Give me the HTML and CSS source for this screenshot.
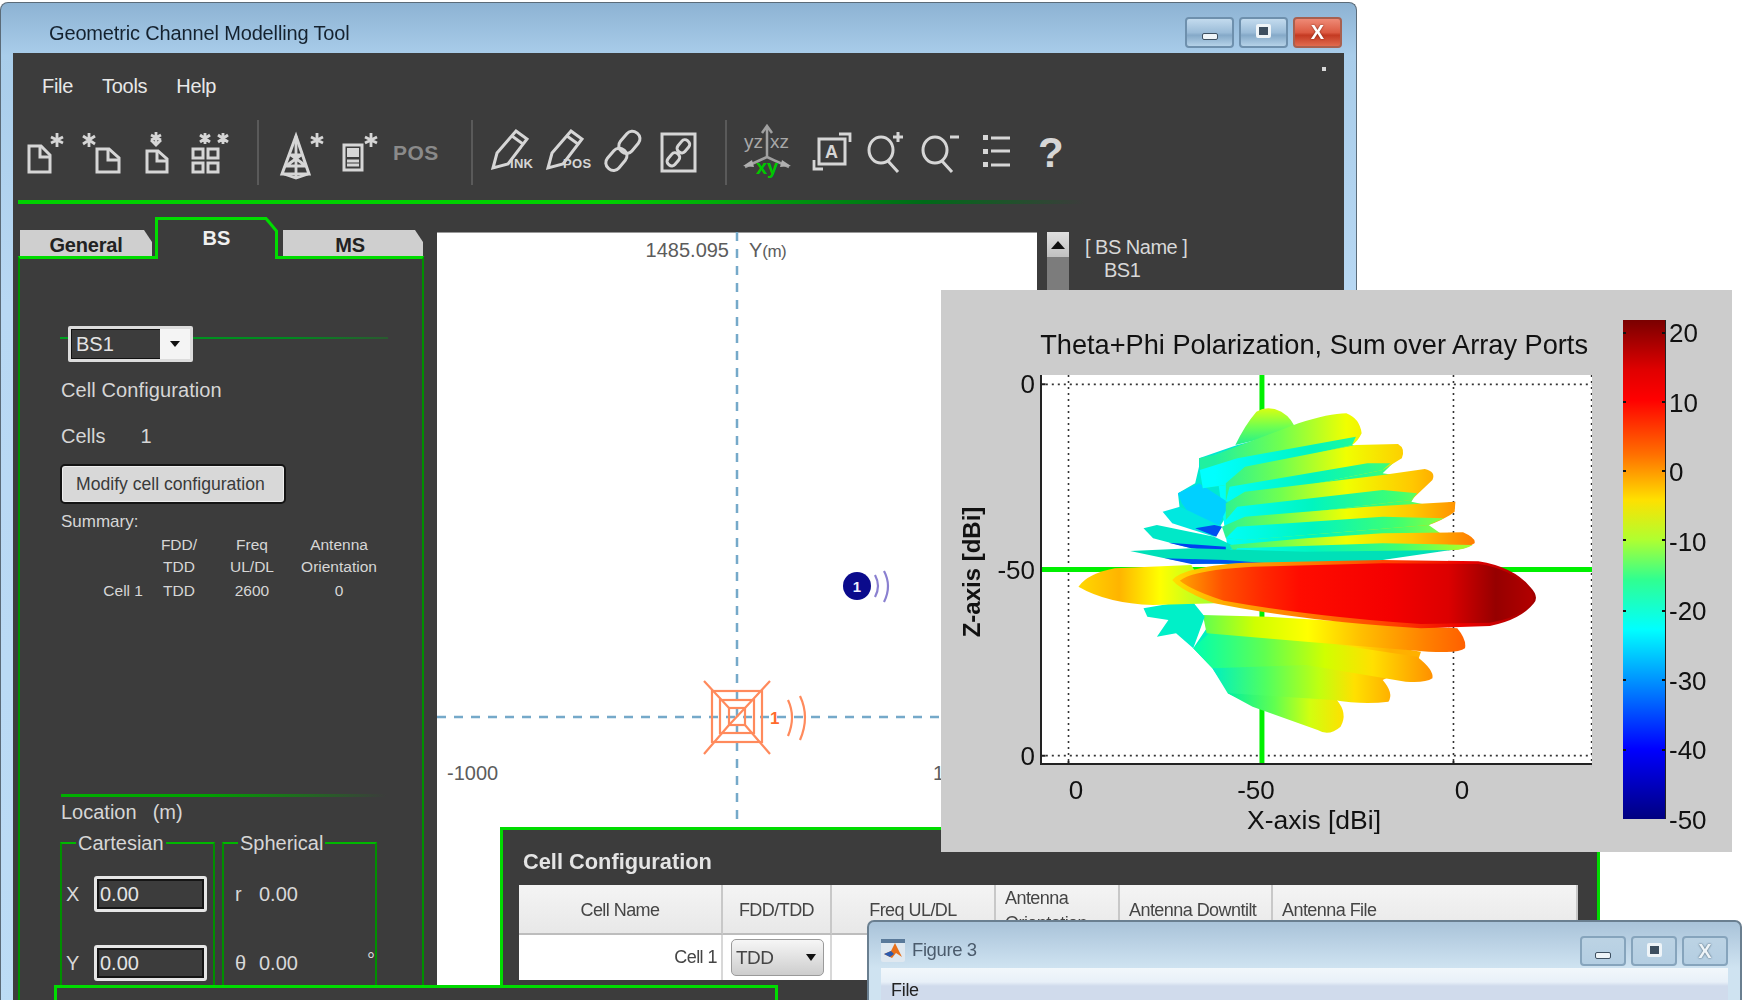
FILE: index.html
```html
<!DOCTYPE html>
<html lang="en">
<head>
<meta charset="utf-8">
<title>Geometric Channel Modelling Tool</title>
<link rel="stylesheet" href="styles.css">
</head>
<body>
<div class="desktop">

  <section class="win main-win">
    <header class="titlebar">
      <span class="title-text">Geometric Channel Modelling Tool</span>
      <div class="win-btns">
        <span class="wbtn"><i class="g-min"></i></span>
        <span class="wbtn"><i class="g-max"></i></span>
        <span class="wbtn wbtn-close"><b>X</b></span>
      </div>
    </header>
    <div class="content">
      <span class="corner-dot"></span>
      <nav class="menu"><span>File</span><span>Tools</span><span>Help</span></nav>
      <div class="toolbar">
        <svg class="ic" width="40" height="67" viewBox="26 119 40 67"><path d="M28 146h12l9 9v17H28z"/><path d="M39 147v10h10"/><path class="thin" d="M56 133v14M50 137l12 6M62 137l-12 6"/></svg>
        <svg class="ic" width="52" height="67" viewBox="70 119 52 67"><path d="M96 149h12l10 9v14H96z"/><path d="M107 150v10h11"/><path class="thin" d="M88 133v14M82 136l12 8M94 136l-12 8"/></svg>
        <svg class="ic" width="46" height="67" viewBox="126 119 46 67"><path d="M146 151h11l9 8v13h-20z"/><path d="M156 152v9h10"/><path class="thin" d="M155 132v12M150 140l5 5 5-5M150 135l10 5M160 135l-10 5"/></svg>
        <svg class="ic" width="56" height="67" viewBox="176 119 56 67"><rect x="192" y="149" width="10" height="9"/><rect x="207" y="149" width="10" height="9"/><rect x="192" y="163" width="10" height="9"/><rect x="207" y="163" width="10" height="9"/><path class="thin" d="M204 133v11M199 135l10 7M209 135l-10 7M222 133v11M217 135l10 7M227 135l-10 7"/></svg>
        <svg class="sepv" width="40" height="67"><line x1="21" y1="1" x2="21" y2="66"/></svg>
        <svg class="ic" width="46" height="67" viewBox="280 119 46 67"><path d="M295 136l-14 38h27z"/><path class="thin" d="M295 136v42M289 155h12M284 166h22M290 155l15 11M300 155l-15 11M283 174l12 4 12-4"/><path class="thin" d="M316 133v14M310 137l12 6M322 137l-12 6"/></svg>
        <svg class="ic" width="50" height="67" viewBox="330 119 50 67"><rect x="343" y="145" width="18" height="25"/><rect class="solid" x="346" y="148" width="12" height="9"/><path class="thin" d="M346 161h12M346 165h12"/><path class="thin" d="M370 133v14M364 137l12 6M376 137l-12 6"/></svg>
        <span class="pos-label">POS</span>
        <svg class="sepv" width="32" height="67"><line x1="16" y1="1" x2="16" y2="66"/></svg>
        <svg class="ic" width="49" height="67" viewBox="491 119 49 67"><path d="M515 131l11 8-19 25-15 4 4-15z"/><path class="thin" d="M511 136l11 8"/><text class="ic-text" x="509" y="168">INK</text></svg>
        <svg class="ic" width="50" height="67" viewBox="544 119 50 67"><path d="M570 131l11 8-19 25-15 4 4-15z"/><path class="thin" d="M566 136l11 8"/><text class="ic-text" x="562" y="168">POS</text></svg>
        <svg class="ic" width="52" height="67" viewBox="598 119 52 67"><rect x="621" y="130" width="15" height="24" rx="7" transform="rotate(40 628 142)"/><rect x="608" y="147" width="15" height="24" rx="7" transform="rotate(40 615 159)"/></svg>
        <svg class="ic" width="54" height="67" viewBox="654 119 54 67"><rect x="661" y="134" width="33" height="37"/><rect x="678" y="139" width="9" height="14" rx="4" transform="rotate(40 682 146)"/><rect x="668" y="152" width="9" height="14" rx="4" transform="rotate(40 672 159)"/></svg>
        <svg class="sepv" width="26" height="67"><line x1="13" y1="1" x2="13" y2="66"/></svg>
        <svg class="ic axes" width="58" height="67" viewBox="742 119 58 67"><path class="gray" d="M766 157v-30M761 133l5-7 5 7M766 157l-22 10M766 157l22 10"/><path class="arrow" d="M742 166l9-6 2 7zM790 166l-9-6-2 7z"/><text class="ax-text" x="743" y="148">yz</text><text class="ax-text" x="769" y="148">xz</text><text class="ax-green" x="755" y="174">xy</text></svg>
        <svg class="ic" width="52" height="67" viewBox="804 119 52 67"><rect x="818" y="139" width="26" height="25"/><text class="box-a" x="824" y="158">A</text><path class="thin" d="M838 134h11v8M813 160v9h9"/></svg>
        <svg class="ic" width="50" height="67" viewBox="860 119 50 67"><ellipse cx="880" cy="150" rx="12" ry="13"/><path d="M887 161l10 11M892 137h10M897 132v10"/></svg>
        <svg class="ic" width="50" height="67" viewBox="914 119 50 67"><ellipse cx="934" cy="150" rx="12" ry="13"/><path d="M941 161l10 11M949 137h9"/></svg>
        <svg class="ic" width="52" height="67" viewBox="968 119 52 67"><path class="sq" d="M982 135h5v5h-5zM982 149h5v5h-5zM982 162h5v5h-5z"/><path d="M990 138h19M990 151h19M990 165h19"/></svg>
        <span class="help-q">?</span>
      </div>
      <div class="rule"></div>

      <div class="workspace">
        <div class="left-col">
          <div class="tabs">
            <span class="tab tab-general">General</span>
            <span class="tab-active">
              <svg class="tab-shape" width="123" height="42" viewBox="0 0 123 42"><polyline points="1.5,42 1.5,1.5 111,1.5 121.5,14 121.5,42"/></svg>
              <span class="tab-active-text">BS</span>
            </span>
            <span class="tab tab-ms">MS</span>
          </div>
          <div class="panel">
            <div class="combo-row">
              <div class="combo"><span class="combo-val">BS1</span><span class="combo-arrow"><i></i></span></div>
            </div>
            <div class="lbl cfg">Cell Configuration</div>
            <div class="lbl cells"><span>Cells</span><span>1</span></div>
            <button class="mod-btn" type="button">Modify cell configuration</button>
            <div class="summary">Summary:</div>
            <div class="sum-grid">
              <span></span><span>FDD/</span><span>Freq</span><span>Antenna</span>
              <span></span><span>TDD</span><span>UL/DL</span><span>Orientation</span>
              <span class="r">Cell 1</span><span>TDD</span><span>2600</span><span>0</span>
            </div>
            <div class="fade-rule"></div>
            <div class="lbl location"><span>Location</span><span>(m)</span></div>
            <div class="groups">
              <fieldset class="grp">
                <legend>Cartesian</legend>
                <div class="row"><span class="axis">X</span><span class="inp">0.00</span></div>
                <div class="row"><span class="axis">Y</span><span class="inp">0.00</span></div>
              </fieldset>
              <fieldset class="grp grp-sph">
                <legend>Spherical</legend>
                <div class="row"><span class="axis">r</span><span>0.00</span></div>
                <div class="row"><span class="axis">θ</span><span>0.00</span><span class="deg">°</span></div>
              </fieldset>
            </div>
          </div>
        </div>

        <div class="map">
          <svg class="map-svg" width="600" height="600" viewBox="437 233 600 600">
            <line class="dash" x1="737" y1="233" x2="737" y2="833"/>
            <line class="dash" x1="437" y1="718" x2="1037" y2="718"/>
            <g class="bs-ico">
              <rect x="712" y="692" width="50" height="51"/>
              <rect x="720" y="701" width="34" height="33"/>
              <rect x="729" y="709" width="16" height="17"/>
              <path d="M704 682l25 27M770 682l-25 27M704 755l25-29M770 755l-25-29M745 709l-16 17"/>
              <path d="M788 701q8 17 0 36M800 697q10 21 0 44"/>
            </g>
            <text class="bs-num" x="770" y="725">1</text>
            <circle class="ms-c" cx="857" cy="587" r="14"/>
            <text class="ms-num" x="857" y="593">1</text>
            <path class="ms-arc" d="M875 576q6 11 0 22M884 572q8 15 0 31"/>
            <text class="map-t" x="729" y="258" text-anchor="end">1485.095</text>
            <text class="map-t" x="749" y="258">Y<tspan class="map-small">(m)</tspan></text>
            <text class="map-t" x="447" y="781">-1000</text>
            <text class="map-t" x="933" y="781">1</text>
          </svg>
        </div>

        <div class="scroll"><span class="scroll-up"><i></i></span><span class="scroll-thumb"></span></div>
        <div class="bs-list"><div>[ BS Name ]</div><div class="bs-item">BS1</div></div>
      </div>
    </div>
  </section>

  <section class="cell-win">
    <h2 class="cell-title">Cell Configuration</h2>
    <div class="cell-table">
      <div class="th c">Cell Name</div>
      <div class="th c">FDD/TDD</div>
      <div class="th c">Freq UL/DL</div>
      <div class="th">Antenna Orientation</div>
      <div class="th">Antenna Downtilt</div>
      <div class="th">Antenna File</div>
      <div class="td r">Cell 1</div>
      <div class="td"><span class="sel">TDD<i></i></span></div>
      <div class="td"></div><div class="td"></div><div class="td"></div><div class="td"></div>
    </div>
  </section>

  <section class="bottom-win"></section>

  <section class="fig-win">
    <header class="fig-title">
      <svg class="fig-ico" width="24" height="23" viewBox="0 0 24 23"><rect width="24" height="23" rx="2" fill="#dfe8f0"/><rect width="24" height="4" fill="#5a7a9a"/><path d="M3 15l7-3 4-8 7 14-6-4-4 5z" fill="#e8701a"/><path d="M3 15l7-3 3 3-4 3z" fill="#2a5ab0"/></svg>
      <span class="fig-name">Figure 3</span>
      <div class="fig-btns">
        <span class="wbtn fbtn"><i class="g-min"></i></span>
        <span class="wbtn fbtn"><i class="g-max"></i></span>
        <span class="wbtn fbtn"><b>X</b></span>
      </div>
    </header>
    <div class="fig-body"><div class="fig-menu">File</div></div>
  </section>

  <section class="chart">
    <div class="chart-title">Theta+Phi Polarization, Sum over Array Ports</div>
    <div class="ylabel"><span>Z-axis [dBi]</span></div>
    <div class="yticks"><span>0</span><span>-50</span><span>0</span></div>
    <div class="plot">
      <svg width="552" height="390" viewBox="104.5 15 1442.5 1170" preserveAspectRatio="none">
        <defs>
          <linearGradient id="gTop" gradientUnits="userSpaceOnUse" x1="560" y1="0" x2="1250" y2="0"><stop offset="0" stop-color="#20f0a0"/><stop offset=".25" stop-color="#70ff50"/><stop offset=".5" stop-color="#f0ff00"/><stop offset=".75" stop-color="#ffc800"/><stop offset="1" stop-color="#ff7800"/></linearGradient>
          <linearGradient id="gLow" gradientUnits="userSpaceOnUse" x1="560" y1="0" x2="1200" y2="0"><stop offset="0" stop-color="#00ffff"/><stop offset=".4" stop-color="#00f5c0"/><stop offset=".75" stop-color="#40ff70"/><stop offset="1" stop-color="#a0ff30"/></linearGradient>
          <linearGradient id="gTopLobe" x1="0" y1="0" x2="0" y2="1"><stop offset="0" stop-color="#d8ff10"/><stop offset=".5" stop-color="#70ff50"/><stop offset="1" stop-color="#20f090"/></linearGradient>
          <linearGradient id="gYel" gradientUnits="userSpaceOnUse" x1="205" y1="0" x2="560" y2="0"><stop offset="0" stop-color="#ffd800"/><stop offset=".3" stop-color="#ffb400"/><stop offset=".6" stop-color="#ffff00"/><stop offset="1" stop-color="#a0ff30"/></linearGradient>
          <linearGradient id="gEdge" gradientUnits="userSpaceOnUse" x1="450" y1="0" x2="1400" y2="0"><stop offset="0" stop-color="#ffe000"/><stop offset=".12" stop-color="#ffb000"/><stop offset=".35" stop-color="#ff8000"/><stop offset=".62" stop-color="#ff3c00"/><stop offset=".8" stop-color="#ee0000"/><stop offset="1" stop-color="#a00000"/></linearGradient>
          <linearGradient id="gMain" gradientUnits="userSpaceOnUse" x1="450" y1="0" x2="1400" y2="0"><stop offset="0" stop-color="#ffb000"/><stop offset=".06" stop-color="#ff8800"/><stop offset=".14" stop-color="#ff5000"/><stop offset=".25" stop-color="#ff2800"/><stop offset=".35" stop-color="#ff0c00"/><stop offset=".6" stop-color="#f40000"/><stop offset=".76" stop-color="#dc0000"/><stop offset=".89" stop-color="#960000"/><stop offset="1" stop-color="#b40000"/></linearGradient>
          <linearGradient id="gD1" gradientUnits="userSpaceOnUse" x1="530" y1="0" x2="1215" y2="0"><stop offset="0" stop-color="#60ff50"/><stop offset=".2" stop-color="#d0ff00"/><stop offset=".4" stop-color="#ffff00"/><stop offset=".6" stop-color="#ffc000"/><stop offset=".85" stop-color="#ff8000"/><stop offset="1" stop-color="#ff6000"/></linearGradient>
          <linearGradient id="gD2" gradientUnits="userSpaceOnUse" x1="505" y1="0" x2="1130" y2="0"><stop offset="0" stop-color="#00ffb0"/><stop offset=".3" stop-color="#60ff50"/><stop offset=".55" stop-color="#d0ff00"/><stop offset=".75" stop-color="#ffe000"/><stop offset="1" stop-color="#ff9000"/></linearGradient>
          <linearGradient id="gD3" gradientUnits="userSpaceOnUse" x1="555" y1="0" x2="1020" y2="0"><stop offset="0" stop-color="#00f0c0"/><stop offset=".3" stop-color="#50ff60"/><stop offset=".6" stop-color="#c0ff10"/><stop offset=".8" stop-color="#ffe000"/><stop offset="1" stop-color="#ffb000"/></linearGradient>
          <linearGradient id="gD4" gradientUnits="userSpaceOnUse" x1="595" y1="0" x2="900" y2="0"><stop offset="0" stop-color="#00f0a0"/><stop offset=".4" stop-color="#60ff50"/><stop offset=".7" stop-color="#d0ff10"/><stop offset="1" stop-color="#ffe000"/></linearGradient>
        </defs>
        <line class="dot" x1="179" y1="15" x2="179" y2="1185"/>
        <line class="dot" x1="1185" y1="15" x2="1185" y2="1185"/>
        <line class="dot" x1="1546" y1="15" x2="1546" y2="1185"/>
        <line class="dot" x1="104" y1="43" x2="1547" y2="43"/>
        <line class="dot" x1="104" y1="1157" x2="1547" y2="1157"/>
        <path class="tick" d="M105 43h14M105 1157h14M179 1185v-12M1185 1185v-12"/>
        <rect class="cross" x="678" y="15" width="13" height="1170"/>
        <rect class="cross" x="104" y="591" width="1443" height="15"/>
        <path fill="url(#gD3)" d="M505 835L560 740L1100 845L1090 880L1000 930L960 960L880 990L890 1030L830 1075L660 1005L595 970L555 895Z"/>
        <path fill="url(#gD4)" d="M595 970L680 925L880 990Q910 1030 890 1070Q860 1100 830 1080L660 1010Z"/>
        <path fill="url(#gD3)" d="M555 895L780 860L1000 930Q1030 970 1015 995Q950 1005 870 990L600 970Z"/>
        <path fill="url(#gD2)" d="M505 835L560 775L800 810L1090 860Q1135 900 1130 925Q1110 940 1060 935L800 885L555 895Z"/>
        <path fill="url(#gD1)" d="M530 735L700 740L1195 775Q1220 810 1215 835Q1200 850 1120 845L800 815L540 790Z"/>
        <path fill="#00f0c8" d="M375 715L500 690L535 740L505 835L460 790L410 800L440 750L385 740Z"/>
        <path fill="url(#gTopLobe)" d="M615 225Q640 165 670 125Q700 105 735 125Q765 145 775 185L690 205Z"/>
        <path fill="#00e8d0" d="M520 265L620 225L775 180L700 280L620 380L570 480L470 420L465 370L510 340L520 290Z"/>
        <path fill="url(#gLow)" d="M560 255L780 170L920 225L1040 265L1000 310L1110 330L1075 395L1180 420L1120 465L1200 530L950 578L600 578Z"/>
        <path fill="#00d0ff" d="M465 370L520 340L600 400L570 470L500 440L475 400Z"/>
        <path fill="url(#gTop)" d="M560 255L780 160Q860 130 905 130Q940 145 945 190Q935 215 920 225L640 300L590 345L530 355L520 265Z"/>
        <path fill="url(#gLow)" d="M530 355L522 300L620 265L930 200L920 225L640 300L590 345Z"/>
        <path fill="url(#gTop)" d="M590 340L640 290L930 225L1040 222Q1060 235 1050 265L1000 300L640 385L590 395Z"/>
        <path fill="url(#gLow)" d="M590 395L600 350L960 280L1020 280L1000 300L640 385Z"/>
        <path fill="url(#gTop)" d="M590 400L640 365L1000 315L1110 297Q1140 305 1130 330L1075 390L640 450L590 450Z"/>
        <path fill="url(#gLow)" d="M590 450L620 410L1000 360L1090 370L1075 390L640 450Z"/>
        <path fill="#00e8e0" d="M425 425L470 410L580 470L560 500L450 460Z"/>
        <path fill="#0050f0" d="M510 475L565 500L580 470L560 465Z"/>
        <path fill="url(#gTop)" d="M580 470L640 440L960 410L1190 395L1188 425Q1160 450 1120 465L640 510L590 505Z"/>
        <path fill="url(#gLow)" d="M590 505L620 470L1000 440L1160 445L1120 465L640 510Z"/>
        <path fill="#00e8c8" d="M375 475L410 465L560 500L615 530L590 545L500 535L400 505Z"/>
        <path fill="#0040f0" d="M440 518L590 530L590 548L500 535Z"/>
        <path fill="url(#gTop)" d="M600 525L800 505L1000 490L1210 487Q1245 505 1240 520Q1215 540 1180 540L620 560Z"/>
        <path fill="url(#gLow)" d="M600 560L620 535L1000 520L1235 525Q1215 540 1180 540L700 560Z"/>
        <path fill="#00e0b8" d="M340 543L500 535L800 545L1180 540L950 578L610 583L500 580L430 565Z"/>
        <path fill="#0050f0" d="M430 565L590 570L700 580L500 582Z"/>
        <path fill="url(#gYel)" d="M205 650Q230 610 300 595L500 585L560 700L400 705Q280 700 205 650Z"/>
        <path fill="url(#gEdge)" d="M450 630Q480 590 640 578L1000 570L1250 574Q1340 590 1385 650Q1410 680 1395 700Q1360 750 1280 768L1100 775Q800 755 560 700Q470 660 450 630Z"/>
        <path fill="url(#gMain)" d="M470 632Q505 600 660 590L1000 580L1250 582Q1335 595 1380 655Q1400 680 1390 700Q1355 745 1280 758L1100 762Q820 740 585 692Q500 660 470 632Z"/>
      </svg>
    </div>
    <svg class="cbar" width="46" height="500" viewBox="0 0 46 500">
      <defs><linearGradient id="jet" x1="0" y1="0" x2="0" y2="1"><stop offset="0" stop-color="#7a0000"/><stop offset=".1" stop-color="#e00000"/><stop offset=".16" stop-color="#ff0000"/><stop offset=".27" stop-color="#ff7000"/><stop offset=".36" stop-color="#ffe000"/><stop offset=".44" stop-color="#b0ff30"/><stop offset=".52" stop-color="#30ff90"/><stop offset=".62" stop-color="#00ffff"/><stop offset=".74" stop-color="#0080ff"/><stop offset=".86" stop-color="#0000ff"/><stop offset="1" stop-color="#000080"/></linearGradient></defs>
      <rect x="0" y="0" width="42" height="499" fill="url(#jet)"/>
      <path class="cb-line" d="M42.500 0v499"/>
      <path class="cb-tick" d="M0 13h3M39 13h3M0 82h3M39 82h3M0 151h3M39 151h3M0 220h3M39 220h3M0 291h3M39 291h3M0 360h3M39 360h3M0 430h3M39 430h3"/>
    </svg>
    <div class="cticks"><span>20</span><span>10</span><span>0</span><span>-10</span><span>-20</span><span>-30</span><span>-40</span><span>-50</span></div>
    <div class="xticks"><span>0</span><span>-50</span><span>0</span></div>
    <div class="xlabel">X-axis [dBi]</div>
  </section>

</div>
</body>
</html>
```
FILE: styles.css
```css
* { box-sizing: border-box; }
html, body { margin: 0; padding: 0; background: #fff; }
body { font-family: "Liberation Sans", Arial, sans-serif; }
.desktop { position: relative; width: 1750px; height: 1000px; overflow: hidden; background: #fff; }

/* main window */
.main-win {
  position: absolute; left: 0; top: 2px; width: 1357px; height: 1040px;
  display: flex; flex-direction: column;
  border: 1px solid #5b6b78; border-bottom: 0; border-radius: 8px 8px 0 0;
  background: linear-gradient(180deg, #8db3d3 0, #a9cdea 52px, #b8d8f3 300px, #bcdcf5 100%);
  padding: 0 12px 0 12px;
  filter: blur(.55px);
}
.titlebar { height: 50px; display: flex; align-items: center; justify-content: space-between; flex: none; }
.title-text { padding-left: 36px; font-size: 20px; letter-spacing: -.15px; color: #15222f; margin-top: 11px; }
.win-btns { display: flex; gap: 5px; margin-right: 2px; margin-top: 8px; }
.wbtn {
  width: 49px; height: 31px; display: flex; align-items: center; justify-content: center;
  border: 2px solid #6e90ad; border-radius: 4px;
  background: linear-gradient(180deg, #c3dbee 0, #9bbcd8 50%, #85a9c8 60%, #b5d2e8 100%);
}
.wbtn-close { background: linear-gradient(180deg, #ee8a76 0, #dc5a42 50%, #c43a22 60%, #e06a4e 100%); border-color: #a8604f; }
.wbtn-close b, .fbtn b { font-size: 20px; color: #fff; text-shadow: 0 0 2px #702010; }
.g-min { display: block; width: 16px; height: 7px; margin-top: 8px; background: #eef4f8; border: 1px solid #3d4f60; border-radius: 2px; }
.g-max { display: block; width: 15px; height: 14px; margin-top: -3px; border: 3px solid #eef4f8; outline: 1px solid #3d4f60; outline-offset: -5px; background: #3d4f60; border-radius: 2px; }
.content { position: relative; flex: 1; background: #3c3c3c; display: flex; flex-direction: column; min-height: 0; }
.corner-dot { position: absolute; right: 18px; top: 14px; width: 4px; height: 4px; background: #d8d8d8; }
.menu { height: 66px; display: flex; align-items: center; gap: 29px; padding-left: 29px; color: #e8e8e8; font-size: 20px; letter-spacing: -.3px; flex: none; }
.toolbar { height: 67px; display: flex; align-items: center; gap: 4px; padding-left: 14px; flex: none; }
.toolbar svg { flex: none; overflow: visible; }
.ic path, .ic rect, .ic ellipse { fill: none; stroke: #d6d6d6; stroke-width: 3; }
.ic .thin { stroke-width: 2.8; }
.ic .solid { fill: #d6d6d6; stroke: none; }
.ic .sq { fill: #d6d6d6; stroke: none; }
.ic .gray { stroke: #a0a0a0; stroke-width: 2.5; }
.ic .arrow { fill: #b0b0b0; stroke: none; }
.ic-text { font: bold 13px "Liberation Sans", sans-serif; fill: #d6d6d6; letter-spacing: .3px; }
.ax-text { font: 19px "Liberation Sans", sans-serif; fill: #a8a8a8; }
.ax-green { font: bold 20px "Liberation Sans", sans-serif; fill: #00c800; }
.box-a { font: bold 18px "Liberation Sans", sans-serif; fill: #d6d6d6; }
.sepv line { stroke: #5a5a5a; stroke-width: 2; }
.pos-label { width: 67px; padding-left: 8px; font-weight: bold; font-size: 21px; color: #8a8a8a; letter-spacing: .5px; }
.help-q { width: 46px; padding-left: 13px; font-weight: bold; font-size: 42px; line-height: 42px; color: #d6d6d6; }
.rule { height: 4px; margin: 14px 260px 0 5px; background: linear-gradient(90deg, #00d000 0, #00d000 55%, #006a18 85%, #3c3c3c 100%); flex: none; }

.workspace { flex: 1; display: flex; align-items: stretch; padding: 13px 0 0 5px; min-height: 0; color: #d8d8d8; }
.left-col { width: 406px; flex: none; display: flex; flex-direction: column; }
.tabs { height: 39px; display: flex; align-items: flex-end; padding-left: 2px; flex: none; position: relative; z-index: 1; }
.tab {
  height: 26px; padding-top: 4px; display: flex; align-items: center; justify-content: center;
  background: #cfcfcf; color: #222; font-weight: bold; font-size: 20px; letter-spacing: -.2px;
  clip-path: polygon(0 0, calc(100% - 8px) 0, 100% 12px, 100% 100%, 0 100%);
}
.tab-general { width: 132px; margin-right: 3px; }
.tab-ms { width: 140px; margin-left: 5px; padding-right: 6px; }
.tab-active { position: relative; width: 123px; height: 42px; margin-bottom: -3px; display: block; }
.tab-shape { position: absolute; left: 0; top: 0; }
.tab-shape polyline { fill: #3c3c3c; stroke: #00dc00; stroke-width: 3; }
.tab-active-text { position: relative; display: block; text-align: center; padding-top: 10px; color: #f0f0f0; font-weight: bold; font-size: 20px; }
.panel {
  flex: 1; min-height: 0; padding-left: 41px;
  border: 2px solid #009000; border-top: 3px solid #00dc00; border-bottom: 0;
}
.combo-row { position: relative; margin-top: 67px; height: 36px; margin-left: 7px; }
.combo-row::before {
  content: ""; position: absolute; left: -8px; width: 328px; top: 11px; height: 2px;
  background: linear-gradient(90deg, #00a020 0, #008a20 70%, #2a5a30 100%);
}
.combo { position: relative; width: 125px; height: 36px; display: flex; border: 3px solid #dcdcdc; border-radius: 2px; background: #3c3c3c; box-shadow: inset 0 0 0 1px #111; }
.combo-val { flex: 1; padding-left: 5px; font-size: 20px; line-height: 30px; color: #e4e4e4; }
.combo-arrow { width: 30px; background: #f4f4f4; display: flex; align-items: center; justify-content: center; }
.combo-arrow i { width: 0; height: 0; border: 5px solid transparent; border-top: 6px solid #111; border-bottom: 0; }
.lbl { font-size: 20px; line-height: 24px; color: #d6d6d6; }
.cfg { margin-top: 16px; letter-spacing: .1px; }
.cells { margin-top: 22px; display: flex; gap: 35px; }
.mod-btn {
  display: block; margin: 16px 0 0 -1px; width: 226px; height: 40px; padding: 0 0 0 14px; text-align: left;
  font: 17.6px "Liberation Sans", sans-serif; color: #3a3a3a;
  background: #d8d8d8; border: 2px solid #141414; border-radius: 5px; box-shadow: inset 0 0 0 1px #eeeeee;
}
.summary { margin-top: 7px; font-size: 17px; line-height: 22px; color: #d6d6d6; }
.sum-grid {
  display: grid; grid-template-columns: 82px 72px 74px 100px; grid-template-rows: 22px 22px 26px;
  margin-top: 1px; font-size: 15.5px; align-items: center; text-align: center; color: #d6d6d6;
}
.sum-grid .r { text-align: right; }
.fade-rule { height: 3px; margin-top: 190px; width: 325px; background: linear-gradient(90deg, #00b000 0, #00a000 45%, #3c3c3c 100%); }
.location { margin-top: 3px; display: flex; gap: 16px; }
.groups { display: flex; gap: 7px; margin: 7px 0 0 -1px; }
.grp { width: 155px; margin: 0; min-width: 0; padding: 21px 0 0 4px; border: 2px solid #009000; border-top-color: #00b800; height: 190px; font-size: 20px; }
.grp legend { margin-left: 10px; padding: 0 2px; line-height: 24px; font-size: 20px; color: #d6d6d6; }
.grp-sph { padding-left: 11px; }
.grp-sph legend { margin-left: 3px; }
.row { position: relative; display: flex; align-items: center; height: 36px; margin-bottom: 33px; }
.axis { width: 28px; flex: none; }
.grp-sph .axis { width: 24px; }
.inp { width: 113px; height: 36px; padding-left: 3px; line-height: 30px; border: 3px solid #e6e6e6; border-radius: 3px; box-shadow: inset 0 0 0 2px #151515; color: #e4e4e4; }
.deg { margin-left: auto; margin-top: -5px; }

.map { width: 600px; height: 760px; margin: 15px 0 0 13px; background: #fff; border-top: 1px solid #999; flex: none; position: relative; }
.map-svg { display: block; margin-top: -1px; }
.dash { stroke: #75a9c9; stroke-width: 2.5; stroke-dasharray: 9 8; }
.bs-ico rect, .bs-ico path { fill: none; stroke: #ff8a5c; stroke-width: 2.2; }
.bs-num { font: bold 17px "Liberation Sans", sans-serif; fill: #ff6a2c; }
.ms-c { fill: #0b0b8c; }
.ms-num { font: bold 15px "Liberation Sans", sans-serif; fill: #f0f0ff; text-anchor: middle; }
.ms-arc { fill: none; stroke: #8a80d0; stroke-width: 2.2; }
.map-t { font: 20px "Liberation Sans", sans-serif; fill: #5c5c5c; }
.map-small { font-size: 17px; letter-spacing: -.6px; }

.scroll { width: 22px; margin: 15px 0 0 10px; display: flex; flex-direction: column; flex: none; }
.scroll-up { height: 25px; background: linear-gradient(180deg, #e0e0e0, #c0c0c0); display: flex; align-items: center; justify-content: center; }
.scroll-up i { width: 0; height: 0; border: 7px solid transparent; border-bottom: 8px solid #111; border-top: 0; }
.scroll-thumb { height: 60px; background: #7c7c7c; }
.bs-list { margin-left: 16px; font-size: 20px; line-height: 23px; color: #d8d8d8; padding-top: 19px; letter-spacing: -.5px; }
.bs-item { padding-left: 19px; }

/* cell configuration */
.cell-win {
  position: absolute; left: 500px; top: 827px; width: 1100px; height: 220px;
  border: 3px solid #00dc00; background: #3c3c3c; padding: 0 0 0 16px; filter: blur(.55px);
}
.cell-title { margin: 20px 0 11px 4px; font-size: 21.8px; line-height: 24px; font-weight: bold; color: #e4e4e4; }
.cell-table {
  width: 1059px; display: grid; grid-template-columns: 204px 109px 164px 124px 153px 305px;
  grid-template-rows: 50px 45px; font-size: 18px; color: #454545; letter-spacing: -.55px;
}
.th { background: linear-gradient(180deg, #f4f4f4, #e8e8e8); border-right: 2px solid #c8c8c8; border-bottom: 2px solid #bdbdbd; display: flex; align-items: center; padding: 3px 0 0 9px; line-height: 25px; overflow: hidden; }
.th.c { justify-content: center; padding-left: 0; }
.td { background: #fff; border-right: 2px solid #d8d8d8; display: flex; align-items: center; }
.td.r { justify-content: flex-end; padding-right: 4px; }
.sel { width: 93px; height: 37px; margin-left: 8px; padding-left: 4px; display: flex; align-items: center; justify-content: space-between; border: 1px solid #9a9a9a; border-radius: 5px; background: linear-gradient(180deg, #f6f6f6, #cdcdcd); font-size: 19px; }
.sel i { width: 0; height: 0; margin-right: 7px; border: 5px solid transparent; border-top: 7px solid #111; border-bottom: 0; }

.bottom-win { position: absolute; left: 54px; top: 985px; width: 724px; height: 60px; border: 3px solid #00dc00; background: #3c3c3c; }

/* figure */
.fig-win {
  position: absolute; left: 867px; top: 920px; width: 875px; height: 120px;
  border: 2px solid #6a7f90; border-radius: 7px 7px 0 0; filter: blur(.55px);
  background: linear-gradient(180deg, #a9c3d9 0, #cfe3f1 46px);
  padding: 0 12px;
}
.fig-title { height: 46px; padding-top: 10px; display: flex; align-items: center; }
.fig-ico { margin-left: 0; flex: none; }
.fig-name { margin-left: 7px; font-size: 18.5px; letter-spacing: -.4px; color: #4b5b6c; }
.fig-btns { margin-left: auto; display: flex; gap: 5px; margin-top: 2px; }
.fbtn { width: 46px; height: 30px; border-color: #86a4bc; background: linear-gradient(180deg, #bcd3e4, #b4cee2); }
.fbtn b { color: #eef4f8; text-shadow: 0 0 2px #30475a; }
.fig-body { height: 80px; background: linear-gradient(180deg, #f2f7fb 0, #e8f0f8 14px, #d0dbec 18px); }
.fig-menu { padding: 12px 0 0 10px; font-size: 18px; color: #222; letter-spacing: -.3px; }

/* chart */
.chart {
  position: absolute; left: 941px; top: 290px; width: 791px; height: 562px; background: #cccccc;
  display: grid; padding: 30px 0 0 22px; color: #111; filter: blur(.4px);
  grid-template-columns: 24px 53px 552px 31px 46px 1fr;
  grid-template-rows: 55px 390px 36px 50px;
}
.chart-title { grid-column: 1 / 4; grid-row: 1; justify-self: end; margin-right: 4px; padding-top: 10px; font-size: 27.2px; line-height: 30px; white-space: nowrap; }
.ylabel { grid-column: 1; grid-row: 2; display: flex; align-items: center; justify-content: center; }
.ylabel span { transform: rotate(-90deg); white-space: nowrap; font-size: 24px; font-weight: bold; margin: 3px 0 0 -6px; }
.yticks { grid-column: 2; grid-row: 2; height: 400px; margin-top: -5px; display: flex; flex-direction: column; justify-content: space-between; align-items: flex-end; padding-right: 5px; font-size: 26px; line-height: 28px; }
.plot { grid-column: 3; grid-row: 2; background: #fff; border-left: 2px solid #222; border-bottom: 2px solid #222; position: relative; overflow: hidden; }
.plot svg { display: block; margin: 0 0 -2px -2px; }
.dot { stroke: #333; stroke-width: 1.6; stroke-dasharray: 2 4; vector-effect: non-scaling-stroke; }
.tick { stroke: #222; fill: none; stroke-width: 2; vector-effect: non-scaling-stroke; }
.cross { fill: #00f000; }
.cbar { grid-column: 5; grid-row: 1 / 5; display: block; }
.cb-line { stroke: #222; stroke-width: 1; fill: none; }
.cb-tick { stroke: #111; stroke-width: 2; fill: none; }
.cticks { grid-column: 6; grid-row: 1 / 5; height: 515px; margin-top: -1px; display: flex; flex-direction: column; justify-content: space-between; font-size: 26px; line-height: 28px; }
.xticks { grid-column: 3; grid-row: 3; display: grid; grid-template-columns: 72px 288px 124px; text-align: center; font-size: 26px; line-height: 28px; padding-top: 11px; height: 40px; }
.xlabel { grid-column: 3; grid-row: 4; font-size: 26.5px; line-height: 30px; padding-left: 207px; margin-top: 4px; }
```
